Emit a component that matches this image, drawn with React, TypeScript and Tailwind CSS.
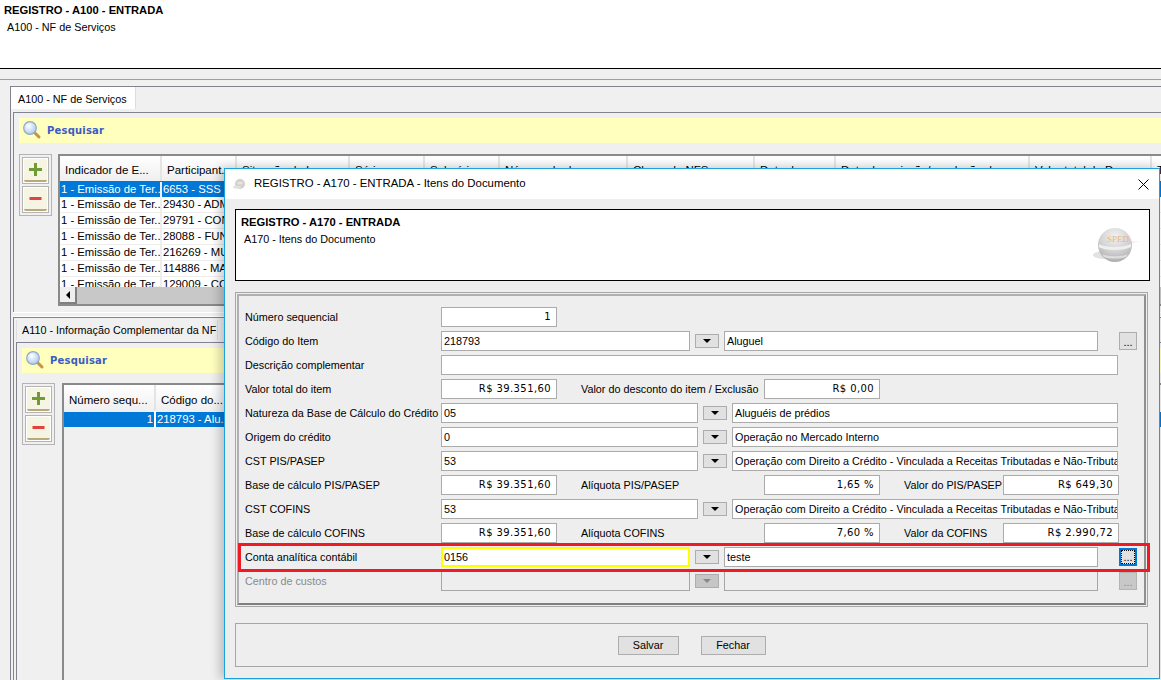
import React from "react";

const Glass = () => (
  <svg width="20" height="20" viewBox="0 0 20 20" className="shrink-0">
    <defs>
      <radialGradient id="gl" cx="40%" cy="35%" r="70%">
        <stop offset="0" stopColor="#ffffff" />
        <stop offset="1" stopColor="#a9c8ec" />
      </radialGradient>
    </defs>
    <line x1="11" y1="11" x2="17" y2="17" stroke="#c9924a" strokeWidth="3" strokeLinecap="round" />
    <circle cx="8" cy="8" r="6.3" fill="url(#gl)" stroke="#8fa9c9" strokeWidth="1.2" />
  </svg>
);

const Search = () => (
  <div className="flex h-[25px] items-center bg-[#ffffbe] pb-[1px] pl-[3px]">
    <Glass />
    <span className="ml-[5px] [font-family:DejaVu_Sans,sans-serif] text-[10px] font-bold tracking-[0.2px] text-[#3a5cc4]">Pesquisar</span>
  </div>
);

const SideBtn = ({ minus }: { minus?: boolean }) => (
  <div className="h-[27px] w-[27px] border border-[#b4b4b4] bg-white p-px">
    <div className="flex h-full w-full items-center justify-center rounded-[2px] border-b-2 border-b-[#b9a97c] bg-[#f6f4e2]">
      <svg width="15" height="15" viewBox="0 0 15 15">
        {minus ? (
          <rect x="1.5" y="6" width="12" height="3" fill="#e2433f" />
        ) : (
          <path d="M6 1h3v5h5v3H9v5H6V9H1V6h5z" fill="#6e9b35" />
        )}
      </svg>
    </div>
  </div>
);

const SideBtns = () => (
  <div className="flex h-[62px] w-[33px] shrink-0 flex-col items-center gap-[2px] border border-[#b4b4b4] pt-[2px]">
    <SideBtn />
    <SideBtn minus />
  </div>
);

const rows1 = ["6653 - SSS ...", "29430 - ADM...", "29791 - CON...", "28088 - FUN...", "216269 - MU...", "114886 - MA...", "129009 - CO..."];
const heads1: [string, number][] = [
  ["Indicador de E...", 102],
  ["Participant...", 75],
  ["Situação do I...", 113],
  ["Série", 75],
  ["Subsérie", 75],
  ["Número do do...", 128],
  ["Chave da NFS...", 127],
  ["Data do...", 81],
  ["Data de emissão/conclusão d", 194],
  ["Valor total do D...", 122],
  ["T", 30],
];

const Head = ({ label, w, h }: { label: string; w: number; h: string }) => (
  <div
    style={{ width: w }}
    className={`${h} shrink-0 overflow-hidden whitespace-nowrap border-r-2 border-r-[#e4e4e4] bg-gradient-to-b from-white to-[#efefef] pl-[5px] text-[11.5px] leading-[14px] text-black`}
  >
    {label}
  </div>
);

const Top = () => (
  <div className="mt-[11px] flex gap-[6px]">
    <SideBtns />
    <div className="h-[152px] min-w-0 flex-1 overflow-hidden border-y-2 border-l-2 border-[#8a8a8a] bg-[#f0f0f0]">
      <div className="flex">
        {heads1.map(([l, w]) => (
          <Head key={l} label={l} w={w} h="h-[25px] pt-[7px]" />
        ))}
      </div>
      <div className="h-[106px] overflow-hidden">
        {rows1.map((r, i) => (
          <div key={r} className={`flex h-[16px] items-center text-[11.3px] leading-[15px] ${i === 0 ? "bg-[#0078d7] text-white" : "border-b border-[#eeeeee] bg-white text-black"}`}>
            <div className="w-[102px] shrink-0 overflow-hidden whitespace-nowrap border-r-2 border-r-[#eeeeee] pl-[1px]">1 - Emissão de Ter...</div>
            <div className="w-[75px] shrink-0 overflow-hidden whitespace-nowrap pl-[1px]">{r}</div>
          </div>
        ))}
      </div>
      <div className="flex h-[17px] bg-[#c8c8c8]">
        <div className="flex w-[17px] items-center justify-center border-b-2 border-r-2 border-b-[#808080] border-r-[#808080] bg-[#efefef]">
          <div className="h-0 w-0 border-y-[4px] border-r-[4px] border-y-transparent border-r-black" />
        </div>
      </div>
    </div>
  </div>
);

const Bottom = () => (
  <div className="mt-[10px] flex gap-[7px]">
    <SideBtns />
    <div className="h-[300px] min-h-0 flex-1 border-l-2 border-t-2 border-[#8a8a8a]">
      <div className="flex">
        <Head label="Número sequ..." w={92} h="h-[27px] pt-[8px]" />
        <Head label="Código do..." w={180} h="h-[27px] pt-[8px]" />
      </div>
      <div className="flex h-[15px] items-center bg-[#0078d7] text-[11.3px] text-white">
        <div className="w-[92px] border-r-2 border-r-white pr-[1px] text-right">1</div>
        <div className="pl-[1px]">218793 - Alu...</div>
      </div>
    </div>
  </div>
);

const Lbl = ({ children, w = "w-[196px]", off }: { children: React.ReactNode; w?: string; off?: boolean }) => (
  <div className={`${w} shrink-0 whitespace-nowrap text-[10.8px] ${off ? "text-[#8a8a8a]" : "text-black"}`}>{children}</div>
);

const Field = ({ w, v, money, focus, off }: { w: string; v?: string; money?: boolean; focus?: boolean; off?: boolean }) => (
  <div
    className={`${w} h-[20px] shrink-0 overflow-hidden whitespace-nowrap leading-[16px] ${
      focus ? "border-2 border-[#ffff00] bg-white pl-[1px]" : off ? "border border-[#a6a6a6] bg-[#eeeeee] pl-[2px] pt-[1px]" : "border border-[#ababab] bg-white pl-[2px] pt-[1px]"
    } ${money ? "pr-[5px] text-right [font-family:DejaVu_Sans,sans-serif] text-[10px] tracking-[0.4px]" : "text-[10.8px]"}`}
  >
    {v}
  </div>
);

const Drop = ({ w, off }: { w: string; off?: boolean }) => (
  <div className={`mx-[5px] flex h-[14px] ${w} shrink-0 items-center justify-center border border-[#adadad] ${off ? "bg-[#c6c6c6]" : "bg-[#e1e1e1]"}`}>
    <div className={`h-0 w-0 border-x-[4px] border-t-[4px] border-x-transparent ${off ? "border-t-[#888888]" : "border-t-black"}`} />
  </div>
);

const Dots = ({ focus, off }: { focus?: boolean; off?: boolean }) => (
  <div
    className={`ml-[21px] flex h-[18px] w-[18px] shrink-0 items-end justify-center ${
      focus ? "border-2 border-[#0078d7] bg-[#e1e1e1] outline-1 -outline-offset-3 outline-dotted outline-black" : off ? "border border-[#b4b4b4] bg-[#c8c8c8] text-[#8a8a8a]" : "border border-[#adadad] bg-[#e1e1e1]"
    } text-[11px] leading-[14px]`}
  >
    ...
  </div>
);

const Row = ({ children }: { children: React.ReactNode }) => <div className="mb-[4px] flex h-[20px] items-center">{children}</div>;

const Long = ({ label, code, text }: { label: string; code: string; text: string }) => (
  <Row>
    <Lbl>{label}</Lbl>
    <Field w="w-[257px]" v={code} />
    <Drop w="w-[24px]" />
    <Field w="w-[386px]" v={text} />
  </Row>
);

const Sphere = () => (
  <svg width="48" height="38" viewBox="0 0 48 38">
    <defs>
      <radialGradient id="sp" cx="50%" cy="25%" r="80%">
        <stop offset="0" stopColor="#f2f2f2" />
        <stop offset="0.55" stopColor="#d2d2d2" />
        <stop offset="1" stopColor="#a8a8a8" />
      </radialGradient>
    </defs>
    <ellipse cx="13" cy="29" rx="12" ry="4" fill="#e2e2e2" />
    <path d="M28 17l20-2-20 5z" fill="#e6e6e6" />
    <circle cx="23" cy="19" r="17" fill="url(#sp)" />
    <path d="M7 18c6 4 24 4 32 0v3c-8 4-26 4-32 0z" fill="#efefef" />
    <path d="M10 28c6 3 20 3 26 0l-2 3c-6 2-18 2-22 0z" fill="#dddddd" />
    <text x="15" y="16" fontFamily="Liberation Serif, serif" fontSize="9" fill="#e8b779">SPED</text>
  </svg>
);

const Gear = () => (
  <svg width="14" height="12" viewBox="0 0 14 12">
    <ellipse cx="7" cy="6" rx="5" ry="5" fill="#cfcfcf" />
    <ellipse cx="7" cy="5" rx="3" ry="1.6" fill="#efe3cf" />
    <ellipse cx="4" cy="9" rx="4" ry="1.5" fill="#e0e0e0" />
  </svg>
);

const Modal = () => (
  <div className="absolute left-[224px] top-[168px] h-[511px] w-[936px] border border-[#1ba1dc] bg-[#eeeeee] text-black shadow-[-4px_0_10px_rgba(0,0,0,0.22)]">
    <div className="flex h-[30px] items-center bg-white pl-[8px]">
      <Gear />
      <span className="ml-[7px] text-[11.4px]">REGISTRO - A170 - ENTRADA - Itens do Documento</span>
      <svg width="11" height="11" viewBox="0 0 11 11" className="ml-auto mr-[10px]">
        <path d="M.5.5l10 10M10.5.5l-10 10" stroke="#000" strokeWidth="1" fill="none" />
      </svg>
    </div>
    <div className="ml-[10px] mt-[10px] flex h-[72px] w-[915px] justify-between border border-black bg-white pl-[5px] pt-[5px]">
      <div>
        <div className="text-[11.2px] font-bold leading-[14px]">REGISTRO - A170 - ENTRADA</div>
        <div className="ml-[3px] mt-[3px] text-[10.8px] leading-[14px]">A170 - Itens do Documento</div>
      </div>
      <div className="mr-[9px] mt-[11px]">
        <Sphere />
      </div>
    </div>
    <div className="relative ml-[10px] mt-[11px] h-[315px] w-[913px] border border-[#a6a6a6] p-px">
      <div className="h-full border-2 border-b-[#808080] border-l-[#b0b0b0] border-r-[#909090] border-t-[#b0b0b0] pl-[6px] pt-[11px]">
        <Row>
          <Lbl>Número sequencial</Lbl>
          <Field w="w-[116px]" v="1" money />
        </Row>
        <Row>
          <Lbl>Código do Item</Lbl>
          <Field w="w-[249px]" v="218793" />
          <Drop w="w-[24px]" />
          <Field w="w-[374px]" v="Aluguel" />
          <Dots />
        </Row>
        <Row>
          <Lbl>Descrição complementar</Lbl>
          <Field w="w-[677px]" />
        </Row>
        <Row>
          <Lbl>Valor total do item</Lbl>
          <Field w="w-[116px]" v="R$ 39.351,60" money />
          <Lbl w="w-[207px] pl-[24px]">Valor do desconto do item / Exclusão</Lbl>
          <Field w="w-[116px]" v="R$ 0,00" money />
        </Row>
        <Long label="Natureza da Base de Cálculo do Crédito" code="05" text="Aluguéis de prédios" />
        <Long label="Origem do crédito" code="0" text="Operação no Mercado Interno" />
        <Long label="CST PIS/PASEP" code="53" text="Operação com Direito a Crédito - Vinculada a Receitas Tributadas e Não-Tributadas" />
        <Row>
          <Lbl>Base de cálculo PIS/PASEP</Lbl>
          <Field w="w-[116px]" v="R$ 39.351,60" money />
          <Lbl w="w-[207px] pl-[24px]">Alíquota PIS/PASEP</Lbl>
          <Field w="w-[116px]" v="1,65 %" money />
          <Lbl w="w-[123px] pl-[24px]">Valor do PIS/PASEP</Lbl>
          <Field w="w-[116px]" v="R$ 649,30" money />
        </Row>
        <Long label="CST COFINS" code="53" text="Operação com Direito a Crédito - Vinculada a Receitas Tributadas e Não-Tributadas" />
        <Row>
          <Lbl>Base de cálculo COFINS</Lbl>
          <Field w="w-[116px]" v="R$ 39.351,60" money />
          <Lbl w="w-[207px] pl-[24px]">Alíquota COFINS</Lbl>
          <Field w="w-[116px]" v="7,60 %" money />
          <Lbl w="w-[123px] pl-[24px]">Valor da COFINS</Lbl>
          <Field w="w-[116px]" v="R$ 2.990,72" money />
        </Row>
        <Row>
          <Lbl>Conta analítica contábil</Lbl>
          <Field w="w-[249px]" v="0156" focus />
          <Drop w="w-[24px]" />
          <Field w="w-[374px]" v="teste" />
          <Dots focus />
        </Row>
        <Row>
          <Lbl off>Centro de custos</Lbl>
          <Field w="w-[249px]" off />
          <Drop w="w-[24px]" off />
          <Field w="w-[374px]" off />
          <Dots off />
        </Row>
      </div>
      <div className="absolute left-[2px] top-[250px] h-[29px] w-[912px] border-[3px] border-[#ed1c24]" />
    </div>
    <div className="ml-[10px] mt-[16px] flex h-[44px] w-[913px] items-center justify-center gap-[22px] border border-[#a6a6a6]">
      <div className="flex h-[19px] w-[61px] items-center justify-center border border-[#adadad] bg-[#e1e1e1] text-[10.8px]">Salvar</div>
      <div className="flex h-[19px] w-[65px] items-center justify-center border border-[#adadad] bg-[#e1e1e1] text-[10.8px]">Fechar</div>
    </div>
  </div>
);

export default function App() {
  return (
    <div className="relative h-[680px] w-[1161px] overflow-hidden bg-[#f0f0f0] [font-family:Liberation_Sans,sans-serif] text-black">
      <div className="h-[69px] border-b border-black bg-white pl-[4px] pt-[3px]">
        <div className="text-[11.2px] font-bold leading-[14px]">REGISTRO - A100 - ENTRADA</div>
        <div className="ml-[3px] mt-[3px] text-[10.8px] leading-[14px]">A100 - NF de Serviços</div>
      </div>
      <div className="h-[11px] border-b border-[#a0a0a0]" />
      <div className="ml-[10px] mt-[6px] h-[594px] border-l border-t border-[#83838f]">
        <div className="h-[25px]">
          <div className="flex h-[22px] w-[125px] items-center whitespace-nowrap border-r border-[#dddddd] bg-white pl-[7px] pt-[2px] text-[10.8px]">A100 - NF de Serviços</div>
        </div>
        <div className="ml-[2px] h-[200px] border-l border-t border-[#83838f] pl-[5px] pt-[5px]">
          <Search />
          <Top />
        </div>
        <div className="ml-[2px] h-[5px] border-y border-y-white" />
        <div className="ml-[2px] border-l border-t border-[#83838f]">
          <div className="h-[24px] pl-[2px] pt-[2px]">
            <div className="flex h-[20px] w-[202px] items-center whitespace-nowrap border-x border-[#dddddd] pl-[5px] text-[10.8px]">A110 - Informação Complementar da NF</div>
          </div>
          <div className="ml-[2px] h-[400px] border-l border-t border-[#83838f] pl-[5px] pt-[5px]">
            <Search />
            <Bottom />
          </div>
        </div>
      </div>
      <Modal />
    </div>
  );
}
